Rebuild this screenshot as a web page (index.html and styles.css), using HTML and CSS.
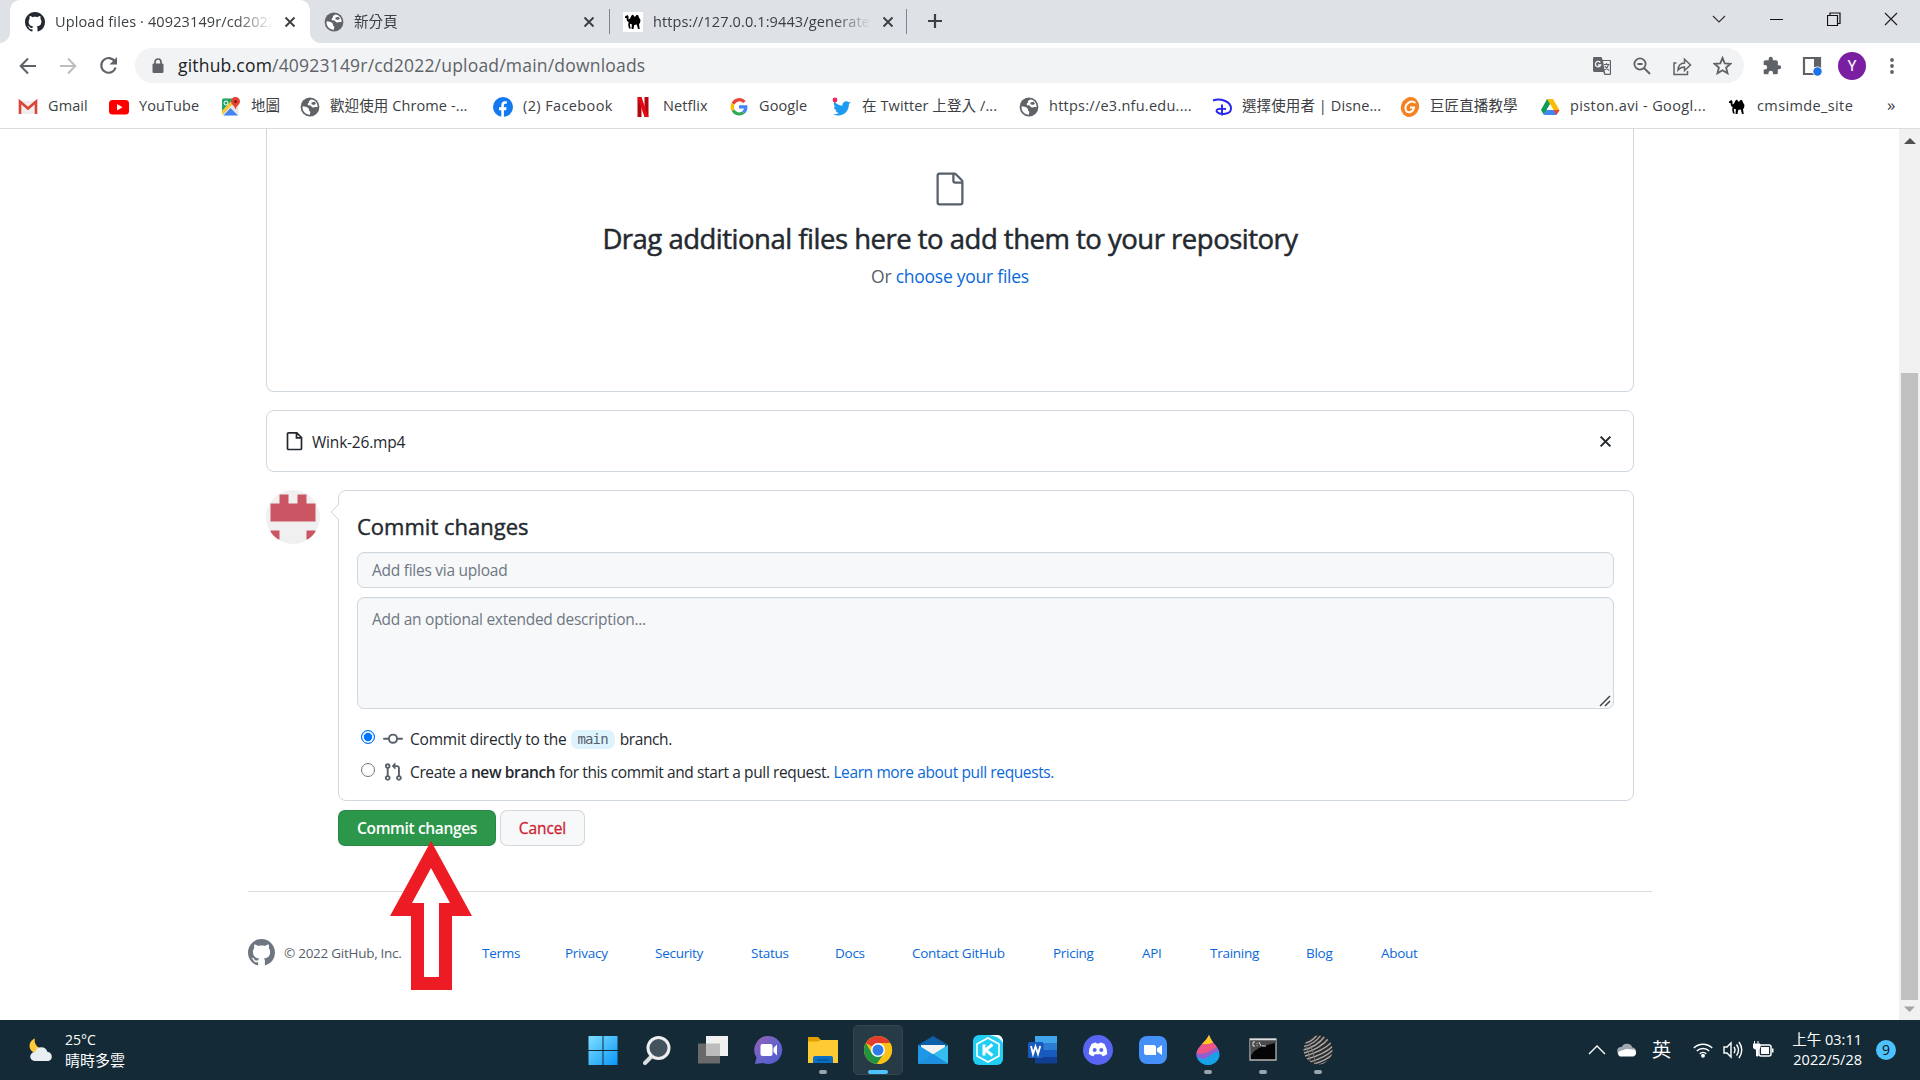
FILE: index.html
```html
<!DOCTYPE html>
<html lang="zh-Hant">
<head>
<meta charset="utf-8">
<title>Upload files · 40923149r/cd2022</title>
<link rel="stylesheet" href="styles.css">
</head>
<body>
<svg class="defs" width="0" height="0" aria-hidden="true">
  <symbol id="octocat" viewBox="0 0 16 16"><path fill-rule="evenodd" d="M8 0C3.58 0 0 3.58 0 8c0 3.54 2.29 6.53 5.47 7.59.4.07.55-.17.55-.38 0-.19-.01-.82-.01-1.49-2.01.37-2.53-.49-2.69-.94-.09-.23-.48-.94-.82-1.13-.28-.15-.68-.52-.01-.53.63-.01 1.08.58 1.23.82.72 1.21 1.87.87 2.33.66.07-.52.28-.87.51-1.07-1.78-.2-3.64-.89-3.64-3.95 0-.87.31-1.59.82-2.15-.08-.2-.36-1.02.08-2.12 0 0 .67-.21 2.2.82.64-.18 1.32-.27 2-.27.68 0 1.36.09 2 .27 1.53-1.04 2.2-.82 2.2-.82.44 1.1.16 1.92.08 2.12.51.56.82 1.27.82 2.15 0 3.07-1.87 3.75-3.65 3.95.29.25.54.73.54 1.48 0 1.07-.01 1.93-.01 2.2 0 .21.15.46.55.38A8.013 8.013 0 0016 8c0-4.42-3.58-8-8-8z"/></symbol>
  <symbol id="globe" viewBox="0 0 20 20"><circle cx="10" cy="10" r="9.400" fill="#5f6368"/><path fill="#fff" d="M2.600 9.200c2.600.4 4.100.4 5.600 1.700 1.400 1.100.2 2.300 1.400 3.100 1 .7.600 1.600.3 3.700C5.600 17.800 2 14.200 2.600 9.200zM11.200 2.500c-1.700 1-2.700 1.200-2.200 2.600.4 1.100-1.700 1-1.300 2.300.5 1.300 2.700.4 3.400 1.600.8 1.400 2 1.800 3.300 1.200 1.200-.5 2.200.2 3.200-.2C17.700 6 15.300 3 11.200 2.500z"/><path fill="#5f6368" d="M11.500 5.500l3-.8 1.500 2-2 1.200-2.600-.6z"/></symbol>
  <symbol id="camel" viewBox="0 0 20 20"><path d="M2 4.500l2.500-1.500 1 1.500v3l1.500-1L8.500 3.500 10 2.500 11.200 4.500l.8.300L13.500 3 15 3l1 2.500 1.500 2.500-.5 3-1 1 .7 5H15l-1.200-4.500-2.600.4-.7 4.100H8.500l.4-4.500-1.200-.8-.9.700.9 4.100H6l-.8-3.500.4-3L4 9 3.500 6 2 6z"/></symbol>
  <symbol id="file" viewBox="0 0 24 24"><path fill-rule="evenodd" d="M5 2.500a.5.5 0 00-.5.5v18a.5.5 0 00.5.5h14a.5.5 0 00.5-.5V8.500h-4a2 2 0 01-2-2v-4H5zm10 0v4a.5.5 0 00.5.5h4a.5.5 0 00-.146-.336l-4.018-4.018A.5.5 0 0015 2.500zM3 3a2 2 0 012-2h9.982a2 2 0 011.414.586l4.018 4.018A2 2 0 0121 7.018V21a2 2 0 01-2 2H5a2 2 0 01-2-2V3z"/></symbol>
  <symbol id="x" viewBox="0 0 12 12"><path d="M1.500 1.500l9 9m0-9l-9 9" fill="none" stroke="currentColor" stroke-width="1.900"/></symbol>
</svg>

<header class="tabs">
  <div class="tab active">
    <svg class="fav dark"><use href="#octocat"/></svg>
    <span class="title">Upload files · 40923149r/cd2022</span>
    <svg class="close"><use href="#x"/></svg>
  </div>
  <div class="tab">
    <svg class="fav"><use href="#globe"/></svg>
    <span class="title">新分頁</span>
    <svg class="close"><use href="#x"/></svg>
  </div>
  <div class="tab ruled">
    <svg class="fav white"><use href="#camel"/></svg>
    <span class="title">https://127.0.0.1:9443/generate</span>
    <svg class="close"><use href="#x"/></svg>
  </div>
  <svg class="newtab" viewBox="0 0 16 16"><path d="M8 1v14M1 8h14" stroke="#3c4043" stroke-width="2.200"/></svg>
  <div class="controls">
    <span><svg width="14" height="10"><path d="M1 2l6 6 6-6" fill="none" stroke="#333" stroke-width="1.200"/></svg></span>
    <span><svg width="14" height="14"><path d="M1 7.500h13" stroke="#111" stroke-width="1"/></svg></span>
    <span><svg width="14" height="14"><path d="M.5 3.500h10v10h-10zM3 3.500v-2.500h10v10.500h-2.500" fill="none" stroke="#111" stroke-width="1.200"/></svg></span>
    <span><svg width="14" height="14"><path d="M1 1l12 12M13 1L1 13" stroke="#222" stroke-width="1.200"/></svg></span>
  </div>
</header>

<nav class="toolbar">
  <span class="tool"><svg width="18" height="18" viewBox="0 0 18 18" fill="none" stroke="#5f6368" stroke-width="2"><path d="M17 9H2M9 1.500L1.700 9 9 16.500"/></svg></span>
  <span class="tool"><svg width="18" height="18" viewBox="0 0 18 18" fill="none" stroke="#bcbec1" stroke-width="2"><path d="M1 9h15M9 1.500L16.300 9 9 16.500"/></svg></span>
  <span class="tool"><svg width="19" height="19" viewBox="0 0 19 19"><path d="M15.800 5.500A7.300 7.300 0 1016.600 11.500" fill="none" stroke="#5f6368" stroke-width="2.100"/><path d="M18 1v7.500h-7.500z" fill="#5f6368"/></svg></span>
  <div class="omnibox">
    <svg class="lock" width="12" height="16" viewBox="0 0 12 16"><path d="M3 7V4a3 3 0 016 0v3" fill="none" stroke="#5f6368" stroke-width="1.700"/><rect x=".5" y="5.500" width="11" height="9.500" rx="1.300" fill="#5f6368"/></svg>
    <p class="url">github.com<span>/40923149r/cd2022/upload/main/downloads</span></p>
    <span class="tool"><svg width="20" height="20" viewBox="0 0 20 20"><path d="M1.500 1h8l1.200 3H18a1 1 0 011 1v13a1 1 0 01-1 1h-5.500l-1.300-3H2.500a1.500 1.500 0 01-1.500-1.500v-12z" fill="#5f6368"/><path d="M11 5h6.800v12.800h-4.500z" fill="#f1f3f4"/><path d="M12 8.500h5.500M14.500 7v1.500M16.500 8.500q-1 4-4 5.500M13 10q1.500 3 4 4.500" stroke="#5f6368" fill="none" stroke-width="1.100"/><path d="M8.300 6.500A2.700 2.700 0 108.700 9H6" fill="none" stroke="#f1f3f4" stroke-width="1.300"/></svg></span>
    <span class="tool"><svg width="18" height="18" viewBox="0 0 18 18" fill="none" stroke="#5f6368" stroke-width="1.800"><circle cx="7" cy="7" r="5.600"/><path d="M11 11l6 6M4.500 7h5"/></svg></span>
    <span class="tool"><svg width="20" height="20" viewBox="0 0 20 20" fill="none" stroke="#5f6368" stroke-width="1.500"><path d="M4.500 7H2v11.500h13.500V15M6 14q.5-7 6.500-7V3.200L18.500 9l-6 5.500V11Q8.500 11 6 14z"/></svg></span>
    <span class="tool"><svg width="19" height="19" viewBox="0 0 20 20" fill="none" stroke="#5f6368" stroke-width="1.900"><path d="M10 2l2.300 5.700 6.200.5-4.700 4 1.500 6L10 15l-5.300 3.200 1.500-6-4.700-4 6.200-.5z"/></svg></span>
  </div>
  <span class="tool first"><svg width="20" height="20" viewBox="0 0 24 24" fill="#5f6368"><path d="M20.500 11H19V7c0-1.100-.9-2-2-2h-4V3.500a2.500 2.500 0 00-5 0V5H4c-1.100 0-2 .9-2 2v3.800h1.500a2.700 2.700 0 010 5.400H2V20c0 1.100.9 2 2 2h3.800v-1.500a2.700 2.700 0 015.400 0V22H17c1.100 0 2-.9 2-2v-4h1.500a2.500 2.500 0 000-5z"/></svg></span>
  <span class="tool"><svg width="20" height="20" viewBox="0 0 20 20"><path d="M2 2h16v16H2z" fill="none" stroke="#5f6368" stroke-width="2.200"/><path d="M12 2h6v9h-6z" fill="#5f6368"/><circle cx="15.500" cy="15.500" r="5" fill="#fff"/><circle cx="15.500" cy="15.500" r="4.200" fill="#1a73e8"/></svg></span>
  <span class="tool"><b class="me">Y</b></span>
  <span class="tool"><svg width="6" height="18" fill="#5f6368"><circle cx="3" cy="3" r="1.900"/><circle cx="3" cy="9" r="1.900"/><circle cx="3" cy="15" r="1.900"/></svg></span>
</nav>

<nav class="bookmarks">
  <a><svg viewBox="0 0 20 20"><path d="M1 4h18v13H1z" fill="#eee"/><path d="M2 17V4.500l8 7 8-7V17" fill="none" stroke="#dc4437" stroke-width="2.600"/></svg><i>Gmail</i></a>
  <a><svg viewBox="0 0 20 20"><rect y="3" width="20" height="14.500" rx="3.500" fill="#f00"/><path d="M8 7l5.500 3.200L8 13.500z" fill="#fff"/></svg><i>YouTube</i></a>
  <a><svg viewBox="0 0 20 20"><rect x="1" y="1.500" width="16.500" height="17" rx="1.500" fill="#e8e8e8"/><path d="M1 3a1.500 1.500 0 011.500-1.500H13L1 14z" fill="#22a565"/><path d="M1 14L13 1.500l2 2L1.500 18z" fill="#fbc52d"/><path d="M2.500 18.500L9.500 11l7.500 7.500z" fill="#4285f4"/><circle cx="5" cy="6" r="2" fill="none" stroke="#fff"/><path d="M14.500 0A4.500 4.500 0 0010 4.500c0 3 3.500 4 4.500 8 1-4 4.500-5 4.500-8A4.500 4.500 0 0014.500 0z" fill="#e74335"/><circle cx="14.500" cy="4.500" r="1.600" fill="#8b1a12"/></svg><i>地圖</i></a>
  <a><svg><use href="#globe"/></svg><i>歡迎使用 Chrome -...</i></a>
  <a><svg viewBox="0 0 20 20"><circle cx="10" cy="10" r="10" fill="#1479ee"/><path d="M8.300 20v-6.800H6v-3h2.300V8.200c0-2.700 1.400-4 3.700-4 1 0 1.800.1 1.800.1v2.500h-1.300c-1.200 0-1.600.7-1.600 1.500v1.900h2.700l-.5 3h-2.200V20z" fill="#fff"/></svg><i class="wide">(2) Facebook</i></a>
  <a><svg viewBox="0 0 20 20"><path d="M4.500 0h4v20h-4zM11.500 0h4v20h-4z" fill="#b1060f"/><path d="M4.500 0h4l7 20h-4z" fill="#e50914"/></svg><i>Netflix</i></a>
  <a><svg viewBox="0 0 20 20" fill="none" stroke-width="3.200"><path d="M15.500 5A7 7 0 004 6.800" stroke="#ea4335"/><path d="M4 6.800a7 7 0 000 6.400" stroke="#fbbc05"/><path d="M4 13.200A7 7 0 0014.500 15.500" stroke="#34a853"/><path d="M14.500 15.500a7 7 0 002.300-5.700H10" stroke="#4285f4"/></svg><i>Google</i></a>
  <a><svg viewBox="0 0 20 20"><path d="M19 4.500a8 8 0 01-2.200.7 4 4 0 00-6.500 3.500A11.500 11.500 0 012.500 4.500a4.100 4.100 0 001.300 5.500L2 9.500a4.100 4.100 0 003.300 4l-1.900.1a4.100 4.100 0 003.400 2.500A8 8 0 011 17.200c7 3 15.500.5 16-10.200z" fill="#1d9bf0"/><circle cx="3" cy="3" r="2.400" fill="#f4245e"/></svg><i>在 Twitter 上登入 /...</i></a>
  <a><svg><use href="#globe"/></svg><i class="mid">https://e3.nfu.edu....</i></a>
  <a><svg viewBox="0 0 20 20" fill="none" stroke="#2424f0" stroke-width="1.900"><path d="M1 3.500C8 1 19 4 19 11.500 19 18 8 18 5 15c-2-2.500 2-4 9-3M10 7.500v11"/></svg><i>選擇使用者 | Disne...</i></a>
  <a><svg viewBox="0 0 20 20"><ellipse cx="10" cy="10" rx="9" ry="10" fill="#f58220" transform="rotate(20 10 10)"/><path d="M15.500 6C11 2.500 5 6.500 5.500 12c.5 5 7.500 4 8.500-1.500h-4" fill="none" stroke="#fff" stroke-width="2"/></svg><i>巨匠直播教學</i></a>
  <a><svg viewBox="0 0 20 20"><path d="M7 2h6L4 18 1 13z" fill="#0f9d58"/><path d="M13 2l6.500 11h-6L7 2z" fill="#fbbc04"/><path d="M6.500 13h13L16 18H4z" fill="#4285f4"/><path d="M13.500 13h6l-3 5z" fill="#ea4335"/><path d="M10 7.300L13.400 13H6.600z" fill="#fff"/></svg><i class="wide">piston.avi - Googl...</i></a>
  <a><svg><use href="#camel"/></svg><i class="wide">cmsimde_site</i></a>
  <em>»</em>
</nav>

<div class="viewport">
  <main>
    <section class="drop">
      <svg width="36" height="36" fill="#57606a"><use href="#file"/></svg>
      <h1>Drag additional files here to add them to your repository</h1>
      <p>Or <a>choose your files</a></p>
    </section>

    <section class="file">
      <svg width="20" height="20"><path fill="none" stroke="#24292f" stroke-width="1.700" d="M3.500 1.800h8.300l4.700 4.700v11a1 1 0 01-1 1H3.500a1 1 0 01-1-1V2.800a1 1 0 011-1zM11.500 2v4.800h5"/></svg>
      <span>Wink-26.mp4</span>
      <svg class="remove"><use href="#x"/></svg>
    </section>

    <div class="commit">
      <svg class="avatar" viewBox="0 0 54 54"><clipPath id="round"><circle cx="27" cy="27" r="27"/></clipPath><g clip-path="url(#round)"><path fill="#f0f0f0" d="M0 0h54v54H0z"/><path fill="#cb5663" d="M4.500 13.500H13.500V4.500H22.500V13.500H31.500V4.500H40.500V13.500H49.500V31.500H4.500zM4.500 40.500H13.500V49.500H4.500zM40.500 40.500H49.500V49.500H40.500z"/></g></svg>
      <div class="right">
        <form class="box">
          <svg class="caret" width="9" height="18" viewBox="0 0 9 18"><path d="M9 1L1 9l8 8" fill="#fff" stroke="#d0d7de"/></svg>
          <h2>Commit changes</h2>
          <div class="field">Add files via upload</div>
          <div class="field area">Add an optional extended description...
            <svg class="grip" width="12" height="12"><path d="M1 11L11 1M6 11l5-5" stroke="#444" stroke-width="1.500"/></svg>
          </div>
          <label><span class="radio on"></span>
            <svg width="20" height="20" viewBox="0 0 16 16" fill="#57606a"><path fill-rule="evenodd" d="M10.500 7.750a2.500 2.500 0 11-5 0 2.500 2.500 0 015 0zm1.430.75a4.002 4.002 0 01-7.860 0H.750a.750.750 0 110-1.500h3.320a4.001 4.001 0 017.860 0h3.320a.750.750 0 110 1.500h-3.320z"/></svg>
            <span class="l1">Commit directly to the</span><code>main</code><span class="l2">branch.</span></label>
          <label><span class="radio"></span>
            <svg width="20" height="20" viewBox="0 0 16 16" fill="#57606a"><path fill-rule="evenodd" d="M7.177 3.073L9.573.677A.250.250 0 0110 .854v4.792a.250.250 0 01-.427.177L7.177 3.427a.250.250 0 010-.354zM3.750 2.500a.750.750 0 100 1.500.750.750 0 000-1.500zm-2.250.750a2.250 2.250 0 113 2.122v5.256a2.251 2.251 0 11-1.500 0V5.372A2.250 2.250 0 011.500 3.250zM11 2.500h-1V4h1a1 1 0 011 1v5.628a2.251 2.251 0 101.500 0V5A2.500 2.500 0 0011 2.500zm1 10.250a.750.750 0 111.500 0 .750.750 0 01-1.500 0zM3.750 12a.750.750 0 100 1.500.750.750 0 000-1.500z"/></svg>
            <span class="l3">Create a <b>new branch</b> for this commit and start a pull request. <a>Learn more about pull requests.</a></span></label>
        </form>
        <div class="actions">
          <button class="primary">Commit changes</button>
          <button class="cancel">Cancel</button>
        </div>
      </div>
    </div>

    <footer>
      <svg width="27" height="27" fill="#6e7781"><use href="#octocat"/></svg>
      <span>© 2022 GitHub, Inc.</span>
      <a>Terms</a><a>Privacy</a><a>Security</a><a>Status</a><a>Docs</a><a>Contact GitHub</a><a>Pricing</a><a>API</a><a>Training</a><a>Blog</a><a>About</a>
    </footer>
  </main>
  <aside class="scroll">
    <svg width="21" height="24"><path d="M5 15h12l-6-6z" fill="#505050"/></svg>
    <div class="thumb"></div>
    <svg width="21" height="20"><path d="M5 6.500h11L10.500 12z" fill="#a3a3a3"/></svg>
  </aside>
  <svg class="arrow" width="82" height="150" viewBox="0 0 82 150"><path d="M41 0l41 75H62v74H21V75H0z" fill="#ed1c24"/><path d="M41 27l19 35H49v74H34V62H22z" fill="#fff"/></svg>
</div>

<footer class="taskbar">
  <div class="weather">
    <svg width="28" height="28" viewBox="0 0 28 28"><path d="M9 2.500a7.500 7.500 0 109 10A8 8 0 019 2.500z" fill="#ffc83d"/><path d="M8.500 25a4.500 4.500 0 01.5-9 6.500 6.500 0 0112.500 0 4.600 4.600 0 011 9z" fill="#e9eef3"/></svg>
    <p>25°C<br><span>晴時多雲</span></p>
  </div>
  <div class="apps">
    <span><svg viewBox="0 0 30 30"><defs><linearGradient id="win" x2="1" y2="1"><stop stop-color="#7fe0ff"/><stop offset="1" stop-color="#0a95f8"/></linearGradient></defs><path fill="url(#win)" d="M.5 1h14v14h-14zM15.500 1h14v14h-14zM.5 16h14v14h-14zM15.500 16h14v14h-14z"/></svg></span>
    <span><svg viewBox="0 0 30 30"><path d="M9 21l-7 7" stroke="#ddd" stroke-width="4" stroke-linecap="round"/><circle cx="15.500" cy="13" r="10.500" fill="#42535d" stroke="#eee" stroke-width="3"/></svg></span>
    <span><svg viewBox="0 0 30 30"><path d="M0 8.500h22v20H0z" fill="#696969"/><path d="M8 1h22v20H8z" fill="#f1f1f1"/><path d="M8 8.500h14v12.500H8z" fill="#bcbcbc"/></svg></span>
    <span><svg viewBox="0 0 30 30"><defs><linearGradient id="chat" x2="1" y2="1"><stop stop-color="#9b5fb5"/><stop offset=".5" stop-color="#6763cb"/><stop offset="1" stop-color="#505bd2"/></linearGradient></defs><path d="M15 1a14 14 0 11-5 27L2 29l1.500-6.500A14 14 0 0115 1z" fill="url(#chat)"/><rect x="7.500" y="9" width="12" height="12" rx="2" fill="#fff"/><path d="M20.500 13l3.500-3.500v11L20.500 17z" fill="#fff"/></svg></span>
    <span class="open"><svg viewBox="0 0 30 30"><path d="M0 2h10l3 3h6v8H0z" fill="#dfa000"/><path d="M0 6.500h10l3-1.500h17v23H0z" fill="#ffcb35"/><path d="M5 28v-5q0-2 2-2h16q2 0 2 2v5z" fill="#0a6fc2"/><path d="M9 25h12" stroke="#07477e"/></svg></span>
    <span class="current"><svg viewBox="0 0 30 30"><circle cx="15" cy="15" r="14" fill="#fbc116"/><path d="M15 15L2.900 8A14 14 0 0127.100 8H15z" fill="#e33b2e"/><path d="M2.900 8a14 14 0 0011 21L21 18.500 15 15 9 18.500z" fill="#229342"/><path d="M15 8h12.100A14 14 0 0114 29l7-10.500z" fill="#fbc116"/><circle cx="15" cy="15" r="7" fill="#fff"/><circle cx="15" cy="15" r="5.500" fill="#2f7de9"/></svg></span>
    <span><svg viewBox="0 0 30 30"><path d="M0 10l15-9 15 9v8H0z" fill="#0d5fa8"/><path d="M3 10h24v8L15 25 3 18z" fill="#f2f2f2"/><path d="M0 10l30 18.500H0z" fill="#1e98e6"/><path d="M30 10v18.500H0z" fill="#35bdf0"/><path d="M15 19l15 9.500H0z" fill="#1c8fe0"/></svg></span>
    <span><svg viewBox="0 0 30 30"><rect width="30" height="30" rx="6" fill="#22cdf3"/><path d="M15 3l11 6v12l-11 6-11-6V9z" fill="none" stroke="#fff" stroke-width="1.600"/><path d="M11 9.500v11M19.500 9.500L12.500 15l7 5.500" fill="none" stroke="#fff" stroke-width="3"/><path d="M16 0h8q6 0 6 8-4-7-14-8z" fill="#fff"/></svg></span>
    <span><svg viewBox="0 0 30 30"><path d="M7 1h22v7H7z" fill="#41a5ee"/><path d="M7 8h22v7H7z" fill="#2b7cd3"/><path d="M7 15h22v7H7z" fill="#185abd"/><path d="M7 22h22v6.500H7z" fill="#103f91"/><rect y="7" width="15.500" height="16" rx="1.500" fill="#185abd"/><path d="M3 11l2 8 2.500-7.500L10 19l2.200-8" fill="none" stroke="#fff" stroke-width="1.900"/></svg></span>
    <span><svg viewBox="0 0 30 30"><circle cx="15" cy="15" r="15" fill="#5865f2"/><path d="M8.500 9q3-1.700 4.500-1.500l.6 1h2.800l.6-1q1.500-.2 4.500 1.500 3 5 2.700 10-2.200 2-4.700 2.200l-1.200-2h-6.600l-1.200 2Q8 21 5.800 19q-.3-5 2.700-10z" fill="#fff"/><circle cx="11.700" cy="15" r="2" fill="#5865f2"/><circle cx="18.300" cy="15" r="2" fill="#5865f2"/></svg></span>
    <span><svg viewBox="0 0 30 30"><rect x="1" y="1" width="28" height="28" rx="8" fill="#4490f8"/><path d="M6 10h9.500q2.500 0 2.500 2.500V20H8.500Q6 20 6 17.500zM19 13.500L24 10v10l-5-3.500z" fill="#fff"/></svg></span>
    <span class="open"><svg viewBox="0 0 30 30"><clipPath id="dropc"><path d="M16 0C13 7 3.500 12 3.500 19.500a11.500 10.500 0 0023 0C26.500 12 19 9 16 0z"/></clipPath><g clip-path="url(#dropc)"><path d="M0 0h30v30H0z" fill="#18a3e8"/><path d="M0 12L30 8v8Q20 17 15 22T0 19z" fill="#9060d0"/><path d="M0 0h30v12q-8 0-13 4T0 18z" fill="#ee5585"/><path d="M9 0h12v7q-6 3-12 2z" fill="#ffc81f"/></g></svg></span>
    <span class="open"><svg viewBox="0 0 30 30"><path d="M2 4h26v21H2z" fill="#050505" stroke="#b5b5b5" stroke-width="1.300"/><path d="M2 4h26v4Q8 11 3 20z" fill="#4a4a4a"/><path d="M7 7H5v4h2M9 8v.8M9 10.300v.8M11 7l2 4M14 11h4" fill="none" stroke="#ddd"/><path d="M2 4.500h26" stroke="#ddd" stroke-width="1.500"/></svg></span>
    <span class="open"><svg viewBox="0 0 30 30"><clipPath id="ball"><circle cx="15" cy="15" r="14.500"/></clipPath><g clip-path="url(#ball)"><path d="M0 0h30v30H0z" fill="#2c2c2c"/><path d="M0 8Q8 8 14 0M0 11.500Q11 10 18 0M0 15Q14 12 22 1M1 18Q17 14 26 3M2 21Q20 16 29 7M4 24Q22 19 30 11M7 27Q23 22 30 15M11 29Q24 25 30 19M16 30Q26 27 30 23" fill="none" stroke="#aaa" stroke-width="1.300"/><path d="M2 10Q6 16 7 26M6 9Q11 16 12 29" fill="none" stroke="#777"/></g></svg></span>
  </div>
  <div class="tray">
    <svg class="up" width="18" height="10"><path d="M1 9l8-8 8 8" fill="none" stroke="#fff" stroke-width="1.400"/></svg>
    <svg class="cloud" width="20" height="14"><path d="M4 12a4 4 0 01.5-8A6 6 0 0115.500 4.500 4 4 0 0117 12z" fill="#9fa8ae"/><path d="M3 13.500a3 3 0 01-1-5l7-2.500 7 .5a3.600 3.600 0 01.5 7z" fill="#fff"/></svg>
    <span class="ime">英</span>
    <svg class="wifi" width="20" height="16" viewBox="0 0 20 16" fill="none" stroke="#fff" stroke-width="1.500"><path d="M.8 6a13 13 0 0118.400 0M3.800 9a8.800 8.800 0 0112.400 0M6.700 11.800a4.700 4.700 0 016.600 0"/><circle cx="10" cy="13.800" r="1.200" fill="#fff"/></svg>
    <svg class="vol" width="20" height="18" viewBox="0 0 20 18" fill="none" stroke="#fff" stroke-width="1.400"><path d="M1 6h3l4-4v14l-4-4H1zM11 6q2 3 0 6M13.500 3.500q4 5.500 0 11M16 1q5.500 8 0 16"/></svg>
    <svg class="bat" width="21" height="18" viewBox="0 0 21 18"><rect x="6" y="4" width="12" height="11" rx="2" fill="none" stroke="#fff" stroke-width="1.500"/><path d="M8 6h8v7H8zM19 7.500h1.500v4H19z" fill="#fff"/><path d="M0 3h7v3q0 2-2 2.500V15H3.500V8.500Q0 8 0 5zM1.500 0v3M5 0v3" fill="#fff" stroke="#fff"/></svg>
    <p class="clock">上午 03:11<br>2022/5/28</p>
    <b>9</b>
  </div>
</footer>
</body>
</html>
```
FILE: styles.css
```css
* { box-sizing: border-box; margin: 0; padding: 0; }
body {
  width: 1920px; height: 1080px; overflow: hidden;
  display: flex; flex-direction: column;
  font-family: "Open Sans", "Noto Sans CJK TC", sans-serif;
  color: #24292f; background: #fff; white-space: nowrap;
}
svg { flex: none; display: block; }
.defs { position: absolute; }
i, em { font-style: normal; }
a { color: #0969da; }

/* Tab strip */
.tabs { height: 43px; background: #dee1e6; display: flex; padding-left: 10px; color: #3c4043; }
.tab { width: 299px; display: flex; align-items: center; padding-left: 15px; position: relative; }
.tab.active { width: 300px; margin-right: -1px; background: #fff; border-radius: 10px 10px 0 0; }
.tab.active::before, .tab.active::after {
  content: ""; position: absolute; bottom: 0; width: 10px; height: 10px;
}
.tab.active::before { left: -10px; background: radial-gradient(circle at 0 0, transparent 9.500px, #fff 10px); }
.tab.active::after { right: -10px; background: radial-gradient(circle at 100% 0, transparent 9.500px, #fff 10px); }
.tab.ruled::before, .tab.ruled::after { content: ""; position: absolute; top: 9px; height: 25px; width: 1px; background: #80868b; }
.tab.ruled::before { left: 1px; }
.tab.ruled::after { right: 0; }
.fav { width: 20px; height: 20px; }
.fav.dark { fill: #24292f; }
.fav.white { background: #fff; }
.title {
  width: 218px; margin-left: 10px; overflow: hidden; font-size: 14.500px; line-height: 24px; letter-spacing: .12px; padding-top: 1px;
  -webkit-mask-image: linear-gradient(90deg, #000 180px, transparent 218px);
  mask-image: linear-gradient(90deg, #000 180px, transparent 218px);
}
.close { width: 12px; height: 12px; margin-left: 11px; color: #3c4043; }
.newtab { width: 16px; height: 16px; margin: 13px 0 0 20px; }
.controls { margin-left: auto; display: flex; height: 38px; }
.controls span { width: 57.500px; display: grid; place-items: center; }

/* Toolbar */
.toolbar { height: 47px; padding: 5px 8px 7px; display: flex; }
.tool { width: 40px; height: 35px; display: grid; place-items: center; flex: none; }
.tool.first { margin-left: 8px; }
.omnibox { width: 1609px; margin-left: 7px; padding: 0 2px 0 17px; border-radius: 18px; background: #f1f3f4; display: flex; align-items: center; }
.url { flex: 1; margin-left: 14px; font-size: 17.500px; line-height: 30px; letter-spacing: .2px; padding-bottom: 2px; color: #202124; }
.url span { color: #5f6368; }
.me { width: 28px; height: 28px; border-radius: 50%; background: #7b1fa2; color: #fff; font: 400 15px/28px Roboto, sans-serif; text-align: center; }

/* Bookmarks */
.bookmarks {
  height: 39px; border-bottom: 1px solid #dadce0; padding: 0 0 5px 18px; align-items: center;
  display: grid; grid-template-columns: 91px 112px 79px 193px 140px 96px 103px 187px 193px 188px 140px 187px 160px auto;
  font-size: 14.500px; line-height: 22px; color: #3c4043; letter-spacing: .1px;
}
.bookmarks a { display: flex; align-items: center; gap: 10px; color: inherit; }
.bookmarks svg { width: 20px; height: 20px; }
.bookmarks i { margin-top: -1px; }
.bookmarks .wide { letter-spacing: .38px; }
.bookmarks .mid { letter-spacing: .25px; }
.bookmarks em { font-size: 17px; line-height: 20px; margin-top: -4px; }

/* Page */
.viewport { height: 891px; display: flex; position: relative; }
main { width: 1899px; padding: 0 265px 0 266px; }
.drop, .file, .box { border: 1px solid #d0d7de; border-radius: 8px; }
.drop { height: 263px; border-top: 0; border-radius: 0 0 8px 8px; display: flex; flex-direction: column; align-items: center; padding-top: 42px; }
.drop h1 { font-size: 27.500px; line-height: 36px; font-weight: 400; letter-spacing: -.500px; -webkit-text-stroke: .5px #24292f; margin-top: 14px; }
.drop p { font-size: 17.500px; line-height: 26px; letter-spacing: -.250px; margin-top: 6px; color: #57606a; }
.file { margin-top: 18px; height: 62px; padding: 0 21px 0 18px; display: flex; align-items: center; font-size: 15.500px; letter-spacing: -.2px; }
.file span { margin: 1px 0 0 7px; }
.remove { width: 13px; height: 13px; margin-left: auto; }
.commit { display: flex; margin-top: 18px; }
.avatar { width: 54px; height: 54px; }
.right { flex: 1; margin-left: 18px; }
.box { position: relative; height: 311px; padding: 17px 19px 0 18px; font-size: 15.500px; }
.caret { position: absolute; left: -9px; top: 12px; }
h2 { font-size: 22px; font-weight: 400; -webkit-text-stroke: .4px #24292f; line-height: 36px; }
.field { margin-top: 8px; height: 36px; padding: 0 13px 0 14px; border: 1px solid #d0d7de; border-radius: 7px; background: #f6f8fa; box-shadow: inset 0 1px 0 rgba(208,215,222,.2); color: #6e7781; line-height: 34px; letter-spacing: -.260px; }
.area { height: 112px; padding-top: 4px; margin-top: 9px; position: relative; }
.grip { position: absolute; right: 2px; bottom: 1px; }
label { display: flex; align-items: center; height: 33px; }
.area + label { margin-top: 13px; }
.radio { width: 14px; height: 14px; margin: -3px 8px 0 4px; border: 1px solid #767676; border-radius: 50%; }
.radio.on { border: 1.500px solid #0075ff; background: #0075ff; box-shadow: inset 0 0 0 1.800px #fff; }
label svg + span { margin-left: 7px; }
.l1 { letter-spacing: -.2px; }
.l2 { letter-spacing: -.4px; }
.l3 { letter-spacing: -.380px; }
code { font: 14px/19px "DejaVu Sans Mono", monospace; letter-spacing: -.9px; padding: 0 7px; margin: 1px 5px 0 4px; background: #ddf4ff; border-radius: 7px; color: #57606a; }
label b { font-weight: 600; }
.actions { display: flex; gap: 4px; margin-top: 9px; }
button { height: 36px; border-radius: 7px; padding-top: 2px; font: 600 15.500px/1 "Open Sans", sans-serif; letter-spacing: -.350px; border: 1px solid rgba(27,31,36,.15); }
.primary { width: 158px; background: #2c974b; color: #fff; }
.cancel { width: 85px; background: #f6f8fa; color: #cf222e; font-weight: 400; letter-spacing: -.1px; -webkit-text-stroke: .3px #cf222e; }
main footer {
  margin: 45px -18px 0; padding-top: 45px; border-top: 1px solid #d8dee4; font-size: 13.500px; letter-spacing: -.270px; color: #57606a;
  display: grid; align-items: center; line-height: 32px;
  grid-template-columns: 36px 198px 83px 90px 96px 84px 77px 141px 89px 68px 96px 75px auto;
}
main footer svg { margin-top: -2px; }
.scroll { width: 21px; background: #f1f1f1; }
.thumb { height: 627px; margin: 220px 2px 0; background: #c1c1c1; }
.arrow { position: absolute; left: 390px; top: 712px; }

/* Taskbar */
.taskbar { height: 60px; background: #142b37; color: #fff; display: flex; align-items: center; }
.weather { width: 575px; padding-left: 26px; display: flex; align-items: center; }
.weather p { margin-left: 11px; font-size: 14px; line-height: 20px; }
.weather span { font-size: 15px; }
.apps { display: flex; width: 990px; }
.apps span { width: 55px; height: 60px; position: relative; display: grid; place-items: center; }
.apps svg { width: 30px; height: 30px; z-index: 1; }
.open::after, .current::after { content: ""; position: absolute; bottom: 6px; left: 24px; width: 8px; height: 4px; border-radius: 2px; background: #9aa5ab; }
.current::after { left: 18px; width: 20px; background: #4cc2ff; }
.current::before { content: ""; position: absolute; inset: 5px 2px 5px 3px; border: 1px solid #33454f; border-radius: 5px; background: #263b46; }
.tray { flex: 1; display: flex; align-items: center; padding-left: 23px; }
.cloud { margin-left: 11px; }
.ime { font-size: 19px; line-height: 24px; margin-left: 15px; width: 20px; }
.wifi { margin-left: 21px; }
.vol { margin-left: 10px; }
.bat { margin-left: 10px; }
.clock { width: 88px; text-align: right; font-size: 14.500px; line-height: 20px; }
.tray b { width: 20px; height: 20px; border-radius: 50%; margin-left: 14px; background: #4cc2ff; color: #111; font: 400 14px/20px "Open Sans", sans-serif; text-align: center; }
```
